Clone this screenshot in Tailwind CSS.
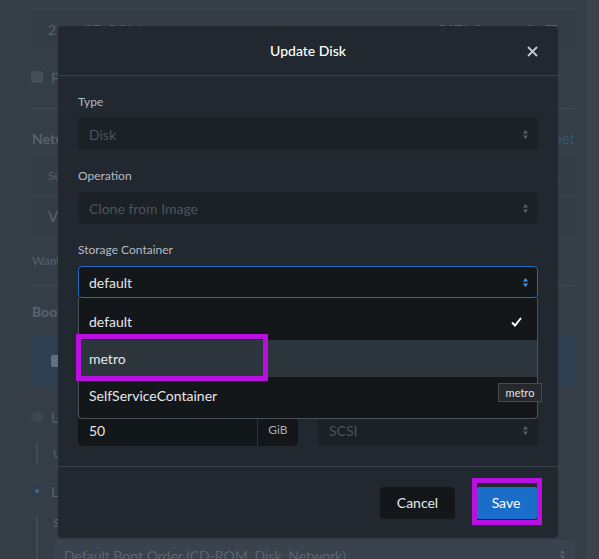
<!DOCTYPE html>
<html lang="en">
<head>
  <meta charset="UTF-8" />
  <title>Update Disk</title>
  <script src="https://cdn.jsdelivr.net/npm/@tailwindcss/browser@4"></script>
</head>
<body class="relative w-[599px] h-[559px] overflow-hidden bg-[#353d47] font-['Lato','Open_Sans',sans-serif] text-[14px]">

  <!-- page behind the modal -->
  <div class="flex h-full">
    <div class="w-[586px] pl-[32px] pr-[11px] flex flex-col shrink-0 text-[#5a636d]">
      <div class="h-[10px] shrink-0 border-b border-[#3f4852]"></div>
      <div class="h-[39px] shrink-0 flex items-center bg-[#343c46] rounded-b pl-[16px] pr-[17px]">
        <span class="w-[35px]">2</span>
        <span class="w-[355px]">CD-ROM</span>
        <span>SATA.0</span>
        <svg class="ml-auto w-[32px] h-[12px]" viewBox="0 0 32 12" fill="#5a636d"><circle cx="4" cy="4" r="3" /><path d="M20 1h11v2H20zM22 4h7v7h-7z" /></svg>
      </div>
      <div class="mt-[22px] h-[12px] shrink-0 flex items-center gap-[8px]">
        <span class="-ml-[1px] w-[12px] h-[12px] rounded-[2px] bg-[#444e59]"></span>
        <span>F</span>
      </div>
      <div class="mt-[25px] shrink-0 border-t border-[#3f4852]"></div>
      <div class="mt-[20px] h-[18px] shrink-0 flex items-center justify-between font-bold">
        <span>Netw</span>
        <span class="font-normal text-[15px] text-[#34556f]">net</span>
      </div>
      <div class="mt-[10px] h-[79px] shrink-0 rounded bg-[#343c46] flex flex-col">
        <div class="h-[39px] border-b border-[#3f4852] px-[16px] flex items-center justify-between text-[12px]"><span>Su</span><span>s</span></div>
        <div class="flex-1 pl-[16px] flex items-center text-[15px]">V</div>
      </div>
      <div class="mt-[17px] h-[16px] shrink-0 text-[12px] leading-[16px]">Want</div>
      <div class="mt-[16px] shrink-0 border-t border-[#3f4852]"></div>
      <div class="mt-[17px] h-[18px] shrink-0 font-bold leading-[18px]">Boot</div>
      <div class="mt-[15px] h-[50px] shrink-0 rounded bg-[#2f3f52] flex items-center pl-[19px]">
        <span class="w-[12px] h-[12px] rounded-[2px] bg-[#5f7285]"></span>
      </div>
      <div class="mt-[25px] h-[12px] shrink-0 flex items-center gap-[8px]">
        <span class="-ml-[1px] w-[12px] h-[12px] rounded-full bg-[#3c4550]"></span><span>U</span>
      </div>
      <div class="mt-[20px] ml-[4px] h-[22px] shrink-0 pl-[15px] border-l-2 border-[#414a55] text-[12px] flex items-center">U</div>
      <div class="mt-[20px] h-[12px] shrink-0 flex items-center gap-[8px]">
        <span class="-ml-[1px] w-[12px] h-[12px] rounded-full bg-[#2d3e54] flex items-center justify-center"><span class="w-[4px] h-[4px] rounded-full bg-[#5a636d]"></span></span><span>L</span>
      </div>
      <div class="mt-[20px] ml-[4px] pl-[15px] border-l-2 border-[#414a55] flex-1 flex flex-col">
        <span class="text-[12px] leading-[12px] h-[23px]">S</span>
        <div class="h-[40px] bg-[#3a434d] rounded pl-[11px] pr-[10px] pt-[5px] flex justify-between text-[14px]">
          <span>Default Boot Order (CD-ROM, Disk, Network)</span>
          <svg class="w-[5px] h-[9px] mt-[5px]" viewBox="0 0 5 9" fill="#5a636d"><path d="M2.5 0L5 3.4H0zM2.5 9L0 5.6h5z" /></svg>
        </div>
      </div>
    </div>
    <div class="w-[13px] bg-[#3a424c]"></div>
  </div>

  <!-- modal -->
  <div class="absolute left-[58px] top-[26px] w-[500px] h-[512px] rounded-[4px] bg-[#22282f] flex flex-col">
    <div class="relative h-[50px] shrink-0 border-b border-[#3a424c] flex items-center justify-center">
      <h2 class="text-[14px] font-medium text-white">Update Disk</h2>
      <svg class="absolute right-[20px] top-[20px] w-[11px] h-[11px]" viewBox="0 0 11 11" fill="none" stroke="#c4cad1" stroke-width="1.8"><path d="M1 1l9 9M10 1l-9 9" /></svg>
    </div>
    <div class="flex-1 px-[20px] pt-[20px] relative">
      <label class="block h-[12px] leading-[12px] text-[12px] text-[#b4bbc3]">Type</label>
      <div class="mt-[10px] h-[32px] rounded-[4px] bg-[#1c2027] pl-[11px] pr-[10px] flex items-center justify-between text-[#4c535c]">
        <span>Disk</span>
        <svg class="w-[5px] h-[9px]" viewBox="0 0 5 9" fill="#59616b"><path d="M2.5 0L5 3.4H0zM2.5 9L0 5.6h5z" /></svg>
      </div>
      <label class="mt-[20px] block h-[12px] leading-[12px] text-[12px] text-[#b4bbc3]">Operation</label>
      <div class="mt-[10px] h-[32px] rounded-[4px] bg-[#1c2027] pl-[11px] pr-[10px] flex items-center justify-between text-[#4c535c]">
        <span>Clone from Image</span>
        <svg class="w-[5px] h-[9px]" viewBox="0 0 5 9" fill="#59616b"><path d="M2.5 0L5 3.4H0zM2.5 9L0 5.6h5z" /></svg>
      </div>
      <label class="mt-[20px] block h-[12px] leading-[12px] text-[12px] text-[#b4bbc3]">Storage Container</label>
      <div class="mt-[10px] h-[32px] rounded-[4px] border border-[#1f6bc0] bg-[#14171a] pl-[10px] pr-[9px] flex items-center justify-between text-[#e4e7ea]">
        <span>default</span>
        <svg class="w-[5px] h-[9px]" viewBox="0 0 5 9" fill="#3f9de8"><path d="M2.5 0L5 3.4H0zM2.5 9L0 5.6h5z" /></svg>
      </div>

      <div class="mt-[116px] flex gap-[20px]">
        <div class="w-[220px] h-[32px] flex rounded-[4px] bg-[#14171a] text-[#e4e7ea]">
          <span class="flex-1 pl-[11px] text-[14px] leading-[34px]">50</span>
          <span class="w-[41px] border-l border-[#2d343b] text-center text-[12px] leading-[32px] text-[#a8afb7]">GiB</span>
        </div>
        <div class="w-[220px] h-[32px] rounded-[4px] bg-[#1c2027] pl-[11px] pr-[10px] flex items-center justify-between text-[#4c535c]">
          <span>SCSI</span>
          <svg class="w-[5px] h-[9px]" viewBox="0 0 5 9" fill="#59616b"><path d="M2.5 0L5 3.4H0zM2.5 9L0 5.6h5z" /></svg>
        </div>
      </div>

      <!-- open dropdown -->
      <ul class="absolute left-[20px] top-[222px] w-[460px] h-[121px] pt-[5px] rounded-b-[4px] border border-t-0 border-[#4a525b] bg-[#14171a] text-[#e4e7ea]">
        <li class="h-[37px] pl-[10px] pr-[15px] flex items-center justify-between">
          <span>default</span>
          <svg class="w-[11px] h-[10px]" viewBox="0 0 11 10" fill="none" stroke="#fff" stroke-width="2"><path d="M1 5.5l3 3L10 1" /></svg>
        </li>
        <li class="h-[37px] pl-[10px] flex items-center bg-[#2c343c]">metro</li>
        <li class="h-[37px] pl-[10px] flex items-center">SelfServiceContainer</li>
      </ul>
    </div>
    <div class="h-[72px] shrink-0 border-t border-[#3a424c] px-[21px] flex items-center justify-end gap-[22px]">
      <button class="w-[75px] h-[32px] rounded-[4px] bg-[#14171a] text-[#e4e7ea] text-[14px]">Cancel</button>
      <button class="w-[60px] h-[32px] pr-[2px] rounded-[2px] bg-[#1a6dc9] text-white text-[14px]">Save</button>
    </div>
  </div>

  <!-- tooltip -->
  <div class="absolute left-[498px] top-[383px] w-[44px] h-[19px] border border-[#4a4a4a] bg-[#26282b] text-[#e0e2e4] text-[11px] leading-[17px] text-center">metro</div>

  <!-- annotation boxes -->
  <div class="absolute left-[76px] top-[334px] w-[192px] h-[47px] border-[5px] border-[#b90fe0]"></div>
  <div class="absolute left-[472px] top-[478px] w-[70px] h-[47px] border-[5px] border-[#b90fe0]"></div>
</body>
</html>
